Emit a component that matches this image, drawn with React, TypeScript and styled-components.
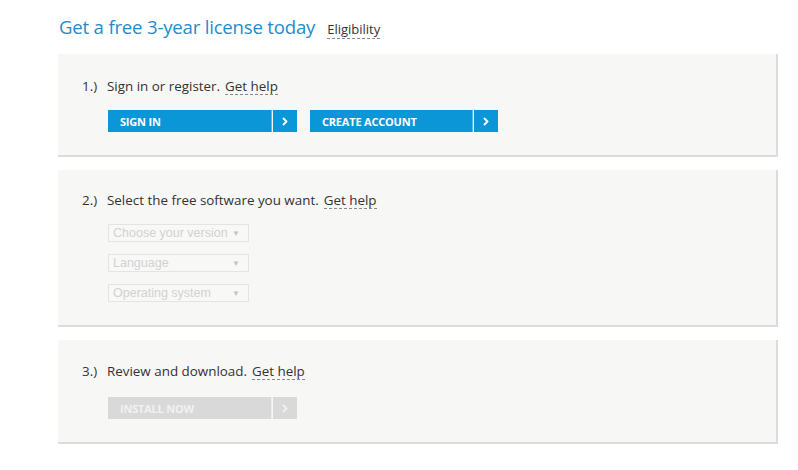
import styled, { createGlobalStyle } from "styled-components";

const GlobalStyle = createGlobalStyle`
  html, body {
    margin: 0;
    padding: 0;
    background: #ffffff;
  }
  body {
    font-family: "Open Sans", "Noto Sans", Arial, sans-serif;
    color: #333333;
  }
`;

const Page = styled.div`
  width: 720px;
  padding: 14px 0 0 58px;
  display: flex;
  flex-direction: column;
`;

const Header = styled.header`
  display: flex;
  align-items: baseline;
  gap: 12px;
  padding-left: 1px;
  height: 40px;
`;

const Title = styled.h1`
  margin: 0;
  font-size: 18.6px;
  font-weight: 400;
  color: #1e8ccc;
  letter-spacing: -0.2px;
`;

const Dotted = styled.span<{ $size?: number }>`
  font-size: ${(p) => p.$size ?? 13.4}px;
  color: #333333;
  border-bottom: 1px dashed #8a8a8a;
  line-height: 1.2;
  cursor: pointer;
`;

const Steps = styled.div`
  display: flex;
  flex-direction: column;
  gap: 13px;
`;

const Panel = styled.section<{ $pt: number; $pb: number; $gap?: number }>`
  background: #f7f7f5;
  border-right: 2px solid #dcdcdc;
  border-bottom: 2px solid #dcdcdc;
  padding: ${(p) => p.$pt}px 0 ${(p) => p.$pb}px 24px;
  display: flex;
  flex-direction: column;
  gap: ${(p) => p.$gap ?? 15}px;
`;

const StepLine = styled.div`
  display: flex;
  align-items: baseline;
  height: 18px;
  font-size: 13.4px;
  line-height: 18px;
`;

const Num = styled.span`
  width: 25px;
  flex: none;
`;

const Label = styled.span`
  margin-right: 5px;
`;

const Content = styled.div<{ $gap?: number }>`
  display: flex;
  gap: ${(p) => p.$gap ?? 13}px;
  padding-left: 26px;
  flex-direction: ${(p) => (p.$gap ? "column" : "row")};
  align-items: flex-start;
`;

const Button = styled.button<{ $disabled?: boolean; $width: number }>`
  display: flex;
  height: 22px;
  padding: 0;
  border: none;
  background: none;
  cursor: ${(p) => (p.$disabled ? "default" : "pointer")};
  font-family: "Open Sans", "Noto Sans", Arial, sans-serif;

  span.main {
    width: ${(p) => p.$width}px;
    box-sizing: border-box;
    padding-left: 12px;
    display: flex;
    align-items: center;
    font-size: 11px;
    font-weight: 700;
    letter-spacing: -0.2px;
    color: ${(p) => (p.$disabled ? "#f1f1f1" : "#ffffff")};
    background: ${(p) => (p.$disabled ? "#d9d9d9" : "#0b96d7")};
    border-right: 1px solid ${(p) => (p.$disabled ? "#ececec" : "#5cb8e8")};
  }

  span.arrow {
    width: 24px;
    margin-left: 1px;
    display: flex;
    align-items: center;
    justify-content: center;
    background: ${(p) => (p.$disabled ? "#d9d9d9" : "#0b96d7")};
  }
`;

const Select = styled.div`
  width: 141px;
  height: 18px;
  box-sizing: border-box;
  border: 1px solid #e4e4e4;
  background: #f8f8f7;
  display: flex;
  align-items: center;
  justify-content: space-between;
  padding: 0 8px 0 4px;
  font-family: Arial, "Liberation Sans", sans-serif;
  font-size: 12.5px;
  color: #d2d2d2;
`;

const Caret = styled.span`
  font-size: 8px;
  color: #c4c4c4;
`;

function Chevron({ color }: { color: string }) {
  return (
    <svg width="6" height="9" viewBox="0 0 6 9">
      <path d="M1 1 L4.5 4.5 L1 8" fill="none" stroke={color} strokeWidth="1.8" />
    </svg>
  );
}

function ActionButton({ text, width, disabled }: { text: string; width: number; disabled?: boolean }) {
  return (
    <Button $width={width} $disabled={disabled}>
      <span className="main">{text}</span>
      <span className="arrow">
        <Chevron color={disabled ? "#f1f1f1" : "#ffffff"} />
      </span>
    </Button>
  );
}

export default function App() {
  return (
    <>
      <GlobalStyle />
      <Page>
        <Header>
          <Title>Get a free 3-year license today</Title>
          <Dotted $size={13}>Eligibility</Dotted>
        </Header>
        <Steps>
          <Panel $pt={23} $pb={23}>
            <StepLine>
              <Num>1.)</Num>
              <Label>Sign in or register.</Label>
              <Dotted>Get help</Dotted>
            </StepLine>
            <Content>
              <ActionButton text="SIGN IN" width={164} />
              <ActionButton text="CREATE ACCOUNT" width={163} />
            </Content>
          </Panel>
          <Panel $pt={21} $pb={23}>
            <StepLine>
              <Num>2.)</Num>
              <Label>Select the free software you want.</Label>
              <Dotted>Get help</Dotted>
            </StepLine>
            <Content $gap={12}>
              <Select>
                Choose your version <Caret>▼</Caret>
              </Select>
              <Select>
                Language <Caret>▼</Caret>
              </Select>
              <Select>
                Operating system <Caret>▼</Caret>
              </Select>
            </Content>
          </Panel>
          <Panel $pt={22} $pb={23} $gap={17}>
            <StepLine>
              <Num>3.)</Num>
              <Label>Review and download.</Label>
              <Dotted>Get help</Dotted>
            </StepLine>
            <Content>
              <ActionButton text="INSTALL NOW" width={164} disabled />
            </Content>
          </Panel>
        </Steps>
      </Page>
    </>
  );
}
